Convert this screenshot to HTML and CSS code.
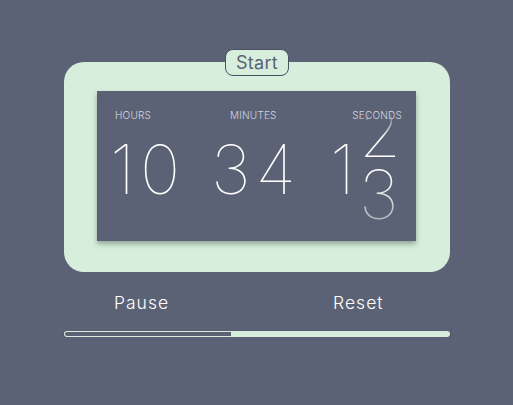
FILE: index.html
```html
<!DOCTYPE html>
<html>
<head>
<meta charset="utf-8">
<link rel="stylesheet" href="styles.css">
</head>
<body>
<div class="app">
  <div class="card">
    <button class="start">Start</button>
    <div class="panel">
      <div class="col col-h">
        <div class="label">HOURS</div>
        <div class="digits">10</div>
      </div>
      <div class="col col-m">
        <div class="label">MINUTES</div>
        <div class="digits">34</div>
      </div>
      <div class="col col-s">
        <div class="label">SECONDS</div>
        <div class="digits">1<span class="roll"><span class="strip"><span>2</span><span>3</span></span></span></div>
      </div>
    </div>
  </div>
  <div class="controls">
    <button class="ctl pause">Pause</button>
    <button class="ctl reset">Reset</button>
  </div>
  <div class="progress"><div class="fill" style="width:43.5%"></div></div>
</div>
</body>
</html>
```
FILE: styles.css
```css
html, body {
  margin: 0;
  background: #5c6275;
  font-family: "Inter", "Lato", sans-serif;
}
.app {
  width: 386px;
  padding: 62px 0 0 64px;
}
.card {
  position: relative;
  height: 210px;
  box-sizing: border-box;
  padding: 29px 34px 0 33px;
  background: #d8eedc;
  border-radius: 20px;
}
.start {
  position: absolute;
  top: -13px;
  left: 161px;
  width: 64px;
  height: 27px;
  padding: 0;
  background: #d8eedc;
  border: 1px solid #4b5164;
  border-radius: 8px;
  color: #5c6275;
  font-family: "Inter", sans-serif;
  font-size: 18px;
  font-weight: 400;
  line-height: 25px;
  letter-spacing: 0.3px;
}
.panel {
  height: 150px;
  background: #5c6275;
  box-shadow: 0 3px 5px rgba(60, 80, 70, 0.45);
  display: flex;
  padding: 0 14px 0 18px;
  box-sizing: border-box;
}
.col { display: flex; flex-direction: column; }
.col-h { width: 100px; }
.col-m { width: 78px; }
.col-s { flex: 1; align-items: flex-end; }
.label {
  position: relative;
  z-index: 1;
  margin-top: 18px;
  font-size: 10px;
  line-height: 12px;
  color: #d3d6de;
  font-weight: 300;
  letter-spacing: 0.2px;
}
.col-m .label { margin-left: 15px; }
.digits {
  margin-top: 8px;
  font-size: 68px;
  line-height: 80px;
  font-weight: 100;
  color: #ffffff;
  letter-spacing: 5px;
  white-space: nowrap;
}
.col-h .digits { margin-left: -5px; }
.col-m .digits { margin-left: -4px; }
.col-s .digits {
  align-self: flex-start;
  margin-left: 37px;
}
.roll {
  display: inline-block;
  position: relative;
  width: 36px;
  height: 80px;
  vertical-align: top;
  margin-left: -1px;
}
.strip {
  display: flex;
  flex-direction: column;
  height: 160px;
  transform: translateY(-37px);
  -webkit-mask-image: linear-gradient(to bottom, transparent 0px, transparent 20px, #000 46px, #000 84px, rgba(0,0,0,0.5) 128px, transparent 150px);
  mask-image: linear-gradient(to bottom, transparent 0px, transparent 20px, #000 46px, #000 84px, rgba(0,0,0,0.5) 128px, transparent 150px);
}
.strip span {
  display: block;
  flex: none;
  height: 62px;
  line-height: 80px;
}
.controls {
  display: flex;
  margin-top: 18px;
  height: 26px;
}
.ctl {
  background: none;
  border: none;
  padding: 0;
  color: #ffffff;
  font-family: "Inter", sans-serif;
  font-size: 17.5px;
  font-weight: 300;
  line-height: 26px;
  letter-spacing: 1px;
}
.pause { margin-left: 50px; }
.reset { margin-left: 164px; }
.progress {
  margin-top: 15px;
  height: 6px;
  border-radius: 3px;
  background: #d8eedc;
  box-shadow: 0 2px 3px rgba(30, 35, 50, 0.5);
  overflow: hidden;
}
.fill {
  height: 6px;
  box-sizing: border-box;
  border: 1px solid #d8eedc;
  border-radius: 3px 0 0 3px;
  background: #5c6275;
}
```
